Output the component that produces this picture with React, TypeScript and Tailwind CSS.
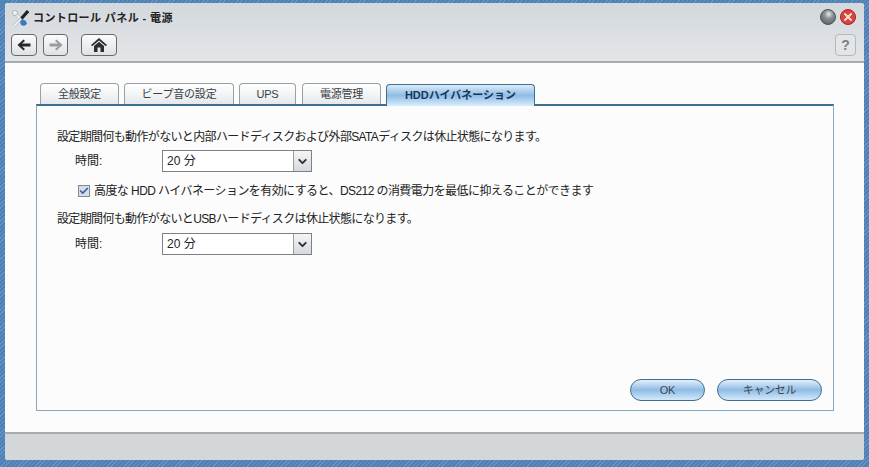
import React from "react";
import { Check, ChevronDown, X } from "lucide-react";

const font = "font-['Liberation_Sans','Noto_Sans_CJK_JP',sans-serif]";

const Tab = ({ label, width, gap }: { label: string; width: string; gap: string }) => (
    <div
        className={`${width} ${gap} h-[21px] rounded-t-[4px] border border-b-0 border-[#9a9fa3] bg-gradient-to-b from-[#ffffff] to-[#e6e9ec] flex items-center justify-center text-[11px] tracking-[-0.2px] text-[#3a3f44]`}
    >
        {label}
    </div>
);

const Select = () => (
    <div className="w-[150px] h-[22px] border border-[#7d8085] bg-white flex items-center">
        <span className="flex-1 pl-[4px] text-[12px] tracking-normal text-[#222]">20 分</span>
        <div className="w-[18px] h-full border-l border-[#9a9da0] bg-gradient-to-b from-[#f4f5f6] to-[#d6d9dc] flex items-center justify-center">
            <ChevronDown size={13} strokeWidth={3.5} className="text-[#27323d]" />
        </div>
    </div>
);

const PillButton = ({ label, width }: { label: string; width: string }) => (
    <div
        className={`${width} h-[22px] rounded-full border border-[#3f6f90] bg-gradient-to-b from-[#e3f0fb] via-[#8fbce4] to-[#d4e9fa] flex items-center justify-center text-[11px] tracking-[-0.3px] text-[#3c4650]`}
    >
        {label}
    </div>
);

const NavButton = ({ width, gap, children }: { width: string; gap: string; children: React.ReactNode }) => (
    <div
        className={`${width} ${gap} h-[22px] rounded-[4px] border border-[#666a6e] bg-gradient-to-b from-[#fbfbfc] to-[#dfe2e4] flex items-center justify-center`}
    >
        {children}
    </div>
);

export default function App() {
    return (
        <div
            className={`${font} w-[869px] h-[467px] pt-[3px] pl-[5px] bg-[#5587bb] bg-[repeating-linear-gradient(135deg,#6494c6_0px,#6494c6_1px,#4d80b4_1px,#4d80b4_3px)]`}
        >
            <div className="w-[859px] h-[457px] rounded-[3px] overflow-hidden flex flex-col bg-white">
                {/* Header */}
                <div className="h-[60px] shrink-0 border-b-2 border-[#a9abad] bg-gradient-to-b from-[#d3d8dc] to-[#e3e6e9] flex flex-col">
                    <div className="h-[31px] shrink-0 pl-[7px] pr-[8px] flex items-center">
                        <svg width="17" height="17" viewBox="0 0 17 17" className="shrink-0">
                            <path d="M3 3l9 10" stroke="#b9bfc4" strokeWidth="3.4" />
                            <path d="M3 3l9 10" stroke="#eef0f1" strokeWidth="2" />
                            <circle cx="3" cy="3" r="2.6" fill="#eef0f1" stroke="#a4aaaf" strokeWidth="0.8" />
                            <path d="M9 9L2 16" stroke="#b9bfc4" strokeWidth="3" />
                            <path d="M9 9L2 16" stroke="#f3f4f5" strokeWidth="1.6" />
                            <path d="M16 1L9.5 8.5" stroke="#1f2225" strokeWidth="3.2" />
                            <path d="M10 9l4 2 1 3-3 2-3-1-1-3z" fill="#3a7cc4" />
                        </svg>
                        <span className="ml-[4px] text-[11px] font-bold tracking-[0.4px] text-[#222] whitespace-pre">コントロール パネル - 電源</span>
                        <div className="ml-auto mb-[3px] flex items-center gap-[4px]">
                            <div className="w-[16px] h-[16px] rounded-full border border-[#4c5053] bg-[radial-gradient(circle_at_55%_30%,#e8eaeb_0%,#8b9093_35%,#50555a_100%)]" />
                            <div className="w-[16px] h-[16px] rounded-full border border-[#a8241f] bg-[#d8433c] flex items-center justify-center">
                                <X size={12} strokeWidth={4} className="text-[#f6dcd9]" />
                            </div>
                        </div>
                    </div>
                    <div className="flex items-center pl-[6px] pr-[8px]">
                        <NavButton width="w-[26px]" gap="">
                            <svg width="14" height="12" viewBox="0 0 14 12">
                                <path d="M6.5 0.5L0.5 6l6 5.500 1.500-1.500L5 7.500h8.500v-3H5L8 2z" fill="#26292c" />
                            </svg>
                        </NavButton>
                        <NavButton width="w-[25px]" gap="ml-[6px]">
                            <svg width="14" height="12" viewBox="0 0 14 12">
                                <path d="M7.500 0.500L13.500 6l-6 5.500-1.500-1.500L9 7.500H0.500v-3H9L6 2z" fill="#9a9da0" />
                            </svg>
                        </NavButton>
                        <NavButton width="w-[36px]" gap="ml-[13px]">
                            <svg width="16" height="14" viewBox="0 0 16 14">
                                <path d="M8 0L0 7l1.200 1.200L8 2.500l6.800 5.700L16 7z" fill="#2b2f33" />
                                <path d="M3 8l5-4.200L13 8v6H9.500V9.500h-3V14H3z" fill="#2b2f33" />
                            </svg>
                        </NavButton>
                        <div className="ml-auto w-[21px] h-[22px] rounded-[4px] border border-[#b4b8bb] bg-[#e3e6e8] flex items-center justify-center text-[14px] font-bold text-[#7d8184]">
                            ?
                        </div>
                    </div>
                </div>

                {/* Content */}
                <div className="flex-1 bg-[#fcfcfc] pt-[20px] pl-[31px]">
                    <div className="flex items-end pl-[4px] h-[21px]">
                        <Tab label="全般設定" width="w-[79px]" gap="" />
                        <Tab label="ビープ音の設定" width="w-[110px]" gap="ml-[5px]" />
                        <Tab label="UPS" width="w-[57px]" gap="ml-[5px]" />
                        <Tab label="電源管理" width="w-[79px]" gap="ml-[6px]" />
                        <div className="ml-[5px] w-[149px] h-[22px] -mb-[2px] z-10 rounded-t-[4px] border border-b-0 border-[#3f6f90] bg-gradient-to-b from-[#dcebf8] via-[#8fbce4] to-[#d9eefd] flex items-center justify-center text-[11px] font-bold text-[#17375a]">
                            HDDハイバネーション
                        </div>
                    </div>
                    <div className="w-[798px] h-[307px] border border-[#84a8bd] border-t-2 border-t-[#3f6f90] flex flex-col px-[20px] pt-[23px] text-[12px] tracking-[-0.65px] text-[#222]">
                        <div className="h-[16px] leading-[16px]">設定期間何も動作がないと内部ハードディスクおよび外部SATAディスクは休止状態になります。</div>
                        <div className="mt-[5px] flex items-center pl-[18px]">
                            <span className="w-[87px] tracking-normal">時間:</span>
                            <Select />
                        </div>
                        <div className="mt-[11px] flex items-center pl-[21px] h-[16px]">
                            <div className="w-[12px] h-[12px] border border-[#7d8a99] bg-[#d5dde8] flex items-center justify-center">
                                <Check size={10} strokeWidth={4} className="text-[#3d5fa0]" />
                            </div>
                            <span className="ml-[4px] tracking-[-0.57px]">高度な HDD ハイバネーションを有効にすると、DS212 の消費電力を最低に抑えることができます</span>
                        </div>
                        <div className="mt-[12px] h-[16px] leading-[16px]">設定期間何も動作がないとUSBハードディスクは休止状態になります。</div>
                        <div className="mt-[6px] flex items-center pl-[18px]">
                            <span className="w-[87px] tracking-normal">時間:</span>
                            <Select />
                        </div>
                        <div className="mt-auto mb-[9px] flex justify-end gap-[12px] -mr-[9px]">
                            <PillButton label="OK" width="w-[75px]" />
                            <PillButton label="キャンセル" width="w-[105px]" />
                        </div>
                    </div>
                </div>

                {/* Footer */}
                <div className="h-[28px] shrink-0 border-t-2 border-[#a9abad] bg-[#d3d7da]" />
            </div>
        </div>
    );
}
